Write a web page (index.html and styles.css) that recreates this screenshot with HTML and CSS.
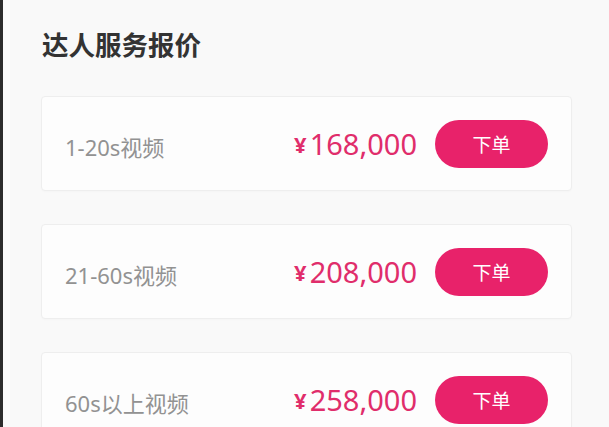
FILE: index.html
```html
<!DOCTYPE html>
<html lang="zh-CN">
<head>
  <meta charset="UTF-8" />
  <meta name="viewport" content="width=device-width, initial-scale=1.0"/>
  <title>达人服务报价</title>
  <link rel="stylesheet" href="styles.css">
</head>
<body>
  <main class="page">
    <h2 class="title">达人服务报价</h2>
    <ul class="price-list">
      <li class="price-card">
        <span class="label">1-20s视频</span>
        <span class="price"><em>¥</em>168,000</span>
        <button class="order-btn">下单</button>
      </li>
      <li class="price-card">
        <span class="label">21-60s视频</span>
        <span class="price"><em>¥</em>208,000</span>
        <button class="order-btn">下单</button>
      </li>
      <li class="price-card">
        <span class="label">60s以上视频</span>
        <span class="price"><em>¥</em>258,000</span>
        <button class="order-btn">下单</button>
      </li>
    </ul>
  </main>
</body>
</html>
```

FILE: styles.css
```css
body { margin: 0; padding: 0; background: #f9f9f9; font-family: "Noto Sans", "Noto Sans CJK SC", sans-serif; overflow: hidden; }
.page { border-left: 3px solid #2b2b2b; min-height: 427px; padding: 26px 37px 0 38px; box-sizing: border-box; }
.title { margin: 0 0 32px 1px; font-size: 26.5px; line-height: 38px; font-weight: bold; color: #333; }
.price-list { list-style: none; margin: 0; padding: 0; display: flex; flex-direction: column; gap: 33px; }
.price-card { display: flex; align-items: center; height: 95px; box-sizing: border-box; padding: 0 23px 0 23px; background: #fdfdfd; border: 1px solid #eeeeee; border-radius: 4px; box-shadow: 0 1px 2px rgba(0,0,0,0.02); }
.label { flex: 1; font-size: 22px; color: #929292; padding-top: 4px; }
.price { font-size: 29px; color: #e02d6b; margin-right: 18px; letter-spacing: 0; }
.price em { font-style: normal; font-weight: bold; font-size: 22px; margin-right: 3px; position: relative; top: -2px; }
.order-btn { width: 113px; height: 48px; border: none; border-radius: 24px; background: #e8226a; color: #fff; font-size: 19px; font-family: inherit; cursor: pointer; }
```
